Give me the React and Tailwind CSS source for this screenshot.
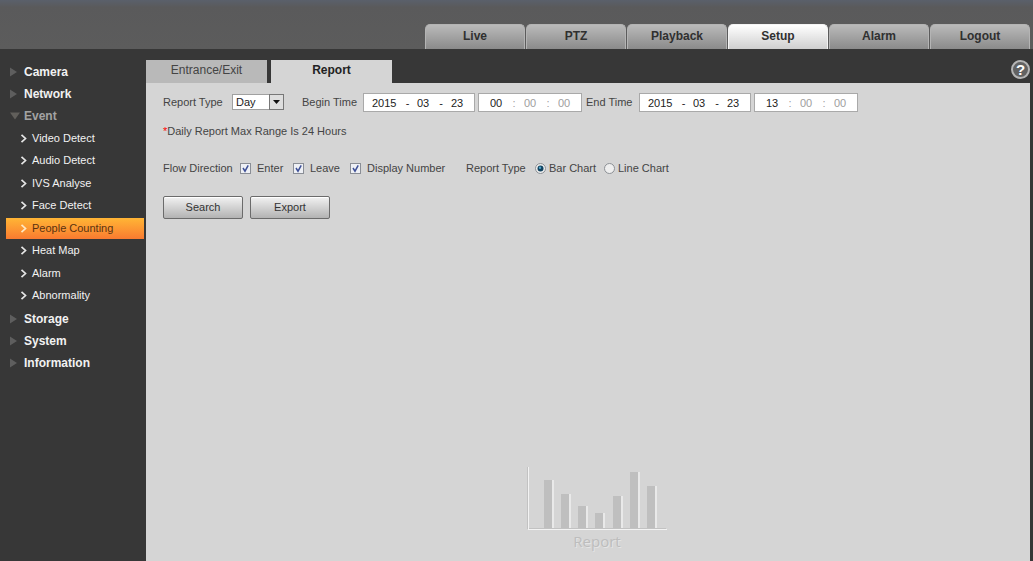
import React, { useState } from "react";

const menu = [
  { name: "Camera" },
  { name: "Network" },
  {
    name: "Event",
    items: [
      "Video Detect",
      "Audio Detect",
      "IVS Analyse",
      "Face Detect",
      "People Counting",
      "Heat Map",
      "Alarm",
      "Abnormality",
    ],
  },
  { name: "Storage" },
  { name: "System" },
  { name: "Information" },
];

const topTabs = ["Live", "PTZ", "Playback", "Setup", "Alarm", "Logout"];

const bars = [
  { x: 17, h: 48 },
  { x: 34, h: 34 },
  { x: 51, h: 22 },
  { x: 68, h: 15 },
  { x: 86, h: 32 },
  { x: 103, h: 56 },
  { x: 120, h: 42 },
];

// ==============================
// Top navigation
// ==============================
const Header = ({ active, onSelect }) => (
  <header className="flex h-[49px] items-end justify-end bg-linear-to-b from-[#5a606b] from-0% via-[#5a5a5b] via-15% to-[#5c5c5c] pr-[3px]">
    <nav className="flex gap-px">
      {topTabs.map((t) => (
        <button
          key={t}
          type="button"
          onClick={() => onSelect(t)}
          className={`h-[25px] w-[100px] rounded-t-[5px] border border-b-0 pb-[2px] text-[12px] leading-[22px] font-bold text-[#303030] ${
            t === active
              ? "border-[#f4f4f4] bg-linear-to-b from-[#ffffff] to-[#cfcfcf]"
              : "border-[#b4b4b4] bg-linear-to-b from-[#bababa] to-[#8b8b8b]"
          }`}
        >
          {t}
        </button>
      ))}
    </nav>
  </header>
);

// ==============================
// Left menu
// ==============================
const Sidebar = ({ active, onSelect }) => (
  <aside className="w-[146px] shrink-0 pt-[12px] pr-[2px] pl-[6px]">
    <ul>
      {menu.map((m) => (
        <li key={m.name}>
          <button
            type="button"
            className={`flex h-[22px] w-full items-center pl-[3px] text-left text-[12px] font-bold ${
              m.items ? "text-[#a3a3a3]" : "text-[#f2f2f2]"
            }`}
          >
            <svg width="11" height="10" viewBox="0 0 11 10" className="mr-[4px] shrink-0">
              {m.items ? (
                <path d="M1 1.5h10L6 8.5z" fill="#615f5b" />
              ) : (
                <path d="M1 0.5v9L8 5z" fill="#5e5e5e" />
              )}
            </svg>
            {m.name}
          </button>
          {m.items && (
            <ul className="pt-px">
              {m.items.map((item) => (
                <li key={item} className="h-[22px] even:h-[23px]">
                  <button
                    type="button"
                    onClick={() => onSelect(item)}
                    className={`flex h-[21px] w-full items-center pl-[14px] text-left text-[11px] ${
                      item === active
                        ? "bg-linear-to-b from-[#ffb535] to-[#f97a30] text-[#5a3210]"
                        : "text-[#f2f2f2]"
                    }`}
                  >
                    <svg width="7" height="9" viewBox="0 0 7 9" className="mr-[5px] shrink-0">
                      <path
                        d="M1.5 0.8l4 3.7-4 3.7"
                        fill="none"
                        stroke={item === active ? "#ffe9c4" : "#e6e6e6"}
                        strokeWidth="1.7"
                      />
                    </svg>
                    {item}
                  </button>
                </li>
              ))}
            </ul>
          )}
        </li>
      ))}
    </ul>
  </aside>
);

// ==============================
// Form pieces
// ==============================
const DateBox = ({ label, value }) => {
  const [year, month, day] = value;
  return (
    <span className="flex h-[19px] w-[112px] items-center border border-[#a9a9a9] bg-white pl-[8px] text-[11px] text-[#222]">
      <input aria-label={`${label} year`} defaultValue={year} className="w-[26px] outline-none" />
      <span className="w-[19px] text-center">-</span>
      <input aria-label={`${label} month`} defaultValue={month} className="w-[14px] outline-none" />
      <span className="w-[20px] text-center">-</span>
      <input aria-label={`${label} day`} defaultValue={day} className="w-[14px] outline-none" />
    </span>
  );
};

const TimeBox = ({ label, hour }) => (
  <span className="flex h-[19px] w-[104px] items-center border border-[#a9a9a9] bg-white pl-[11px] text-[11px] text-[#a0a0a0]">
    <input aria-label={`${label} hour`} defaultValue={hour} className="w-[14px] text-[#222] outline-none" />
    <span className="w-[20px] text-center">:</span>
    <input aria-label={`${label} minute`} defaultValue="00" disabled className="w-[14px]" />
    <span className="w-[20px] text-center">:</span>
    <input aria-label={`${label} second`} defaultValue="00" disabled className="w-[14px]" />
  </span>
);

const Check = ({ label, className }) => (
  <label className={`flex shrink-0 items-center gap-[6px] ${className}`}>
    <span className="relative flex">
      <input
        type="checkbox"
        defaultChecked
        className="peer size-[11px] appearance-none border border-[#8a8e96] bg-[#eef0f5]"
      />
      <svg
        viewBox="0 0 11 11"
        className="pointer-events-none absolute inset-0 hidden size-[11px] peer-checked:block"
      >
        <path d="M3 5l2 3.2L8.2 2.4" fill="none" stroke="#3d4f96" strokeWidth="1.5" />
      </svg>
    </span>
    {label}
  </label>
);

const Radio = ({ label, checked, onChange, className }) => (
  <label className={`flex shrink-0 items-center gap-[3px] ${className}`}>
    <span className="relative flex">
      <input
        type="radio"
        name="chart"
        checked={checked}
        onChange={onChange}
        className="peer size-[11px] appearance-none rounded-full border border-[#8d9196] bg-[#eeeeee]"
      />
      <svg
        viewBox="0 0 11 11"
        className="pointer-events-none absolute inset-0 hidden size-[11px] peer-checked:block"
      >
        <circle cx="5.5" cy="5.5" r="3" fill="#12425f" />
        <circle cx="5" cy="4.8" r="1.2" fill="#4fa6cb" />
      </svg>
    </span>
    {label}
  </label>
);

const buttonClass =
  "h-[23px] w-[80px] rounded-[2px] border border-[#6b6b6b] bg-linear-to-b from-[#f2f2f2] to-[#b3b3b3] pb-px text-[11px] text-[#333] shadow-[inset_0_1px_0_#fff]";

// ==============================
// Empty chart placeholder
// ==============================
const ChartPlaceholder = () => (
  <div className="mt-auto flex flex-col items-center pb-[10px] pl-px">
    <svg width="141" height="65" viewBox="0 0 141 65" className="block">
      {bars.map((b) => (
        <g key={b.x}>
          <rect x={b.x + 1} y={62 - b.h} width="9" height={b.h} fill="#e9e9e9" />
          <rect x={b.x} y={62 - b.h} width="8" height={b.h} fill="#bfbfbf" />
        </g>
      ))}
      <path d="M0.5 1v62M0 62.5h139" stroke="#c2c2c2" fill="none" />
      <path d="M1.5 1v62M1 63.5h139" stroke="#f3f3f3" fill="none" />
    </svg>
    <span className="font-['Open_Sans',sans-serif] text-[15px] leading-5 text-[#bdbdbd] [text-shadow:1px_1px_0_#e4e4e4]">
      Report
    </span>
  </div>
);

const ReportPanel = () => {
  const [chart, setChart] = useState("bar");

  return (
    <section className="flex grow flex-col bg-[#d5d5d5] pt-[10px] pl-[17px] text-[11px] leading-4 text-[#444]">
      <div className="flex h-[19px] items-center whitespace-nowrap">
        <label htmlFor="reportType" className="w-[69px] shrink-0 pb-[2px]">
          Report Type
        </label>
        <span className="relative mr-[18px] flex shrink-0 pb-[2px]">
          <select
            id="reportType"
            className="h-[16px] w-[52px] appearance-none border border-[#a0a0a0] bg-white pl-[3px] text-[11px] leading-[14px] text-[#222]"
          >
            <option>Day</option>
            <option>Month</option>
            <option>Year</option>
          </select>
          <span className="pointer-events-none absolute top-0 right-0 flex h-[16px] w-[15px] items-center justify-center border border-[#777] bg-[#dedede]">
            <svg width="7" height="4" viewBox="0 0 7 4">
              <path d="M0 0h7L3.5 4z" fill="#111" />
            </svg>
          </span>
        </span>
        <span className="w-[61px] shrink-0 pb-[2px]">Begin Time</span>
        <DateBox label="Begin" value={["2015", "03", "23"]} />
        <span className="w-[3px]" />
        <TimeBox label="Begin" hour="00" />
        <span className="ml-[4px] w-[53px] shrink-0 pb-[2px]">End Time</span>
        <DateBox label="End" value={["2015", "03", "23"]} />
        <span className="w-[3px]" />
        <TimeBox label="End" hour="13" />
      </div>

      <p className="mt-[11px]">
        <span className="text-[#f00]">*</span>Daily Report Max Range Is 24 Hours
      </p>

      <div className="mt-[21px] flex items-center whitespace-nowrap">
        <span className="w-[77px] shrink-0">Flow Direction</span>
        <Check label="Enter" className="w-[53px]" />
        <Check label="Leave" className="w-[57px]" />
        <Check label="Display Number" className="w-[116px]" />
        <span className="w-[69px] shrink-0">Report Type</span>
        <Radio
          label="Bar Chart"
          checked={chart === "bar"}
          onChange={() => setChart("bar")}
          className="w-[69px]"
        />
        <Radio
          label="Line Chart"
          checked={chart === "line"}
          onChange={() => setChart("line")}
        />
      </div>

      <div className="mt-[20px] flex gap-[7px]">
        <button type="button" className={buttonClass}>
          Search
        </button>
        <button type="button" className={buttonClass}>
          Export
        </button>
      </div>

      <ChartPlaceholder />
    </section>
  );
};

const App = () => {
  const [topTab, setTopTab] = useState("Setup");
  const [page, setPage] = useState("People Counting");
  const [tab, setTab] = useState("Report");

  return (
    <div className="flex min-h-screen flex-col bg-[#373737] font-['Liberation_Sans',Arial,sans-serif]">
      <Header active={topTab} onSelect={setTopTab} />
      <div className="flex grow">
        <Sidebar active={page} onSelect={setPage} />
        <main className="flex grow flex-col pt-[11px] pr-[3px]">
          <div className="flex h-[23px] items-stretch gap-[4px]">
            {["Entrance/Exit", "Report"].map((t) => (
              <button
                key={t}
                type="button"
                onClick={() => setTab(t)}
                className={`w-[121px] pb-[3px] text-[12px] ${
                  t === tab ? "bg-[#d5d5d5] font-bold text-[#222]" : "bg-[#b9b9b9] text-[#444]"
                }`}
              >
                {t}
              </button>
            ))}
            <button
              type="button"
              aria-label="Help"
              className="ml-auto flex size-[19px] items-center justify-center rounded-full border-2 border-[#b5b5b5] bg-[#626262] text-[15px] leading-none font-bold text-white"
            >
              ?
            </button>
          </div>
          <ReportPanel />
        </main>
      </div>
    </div>
  );
};

export default App;
